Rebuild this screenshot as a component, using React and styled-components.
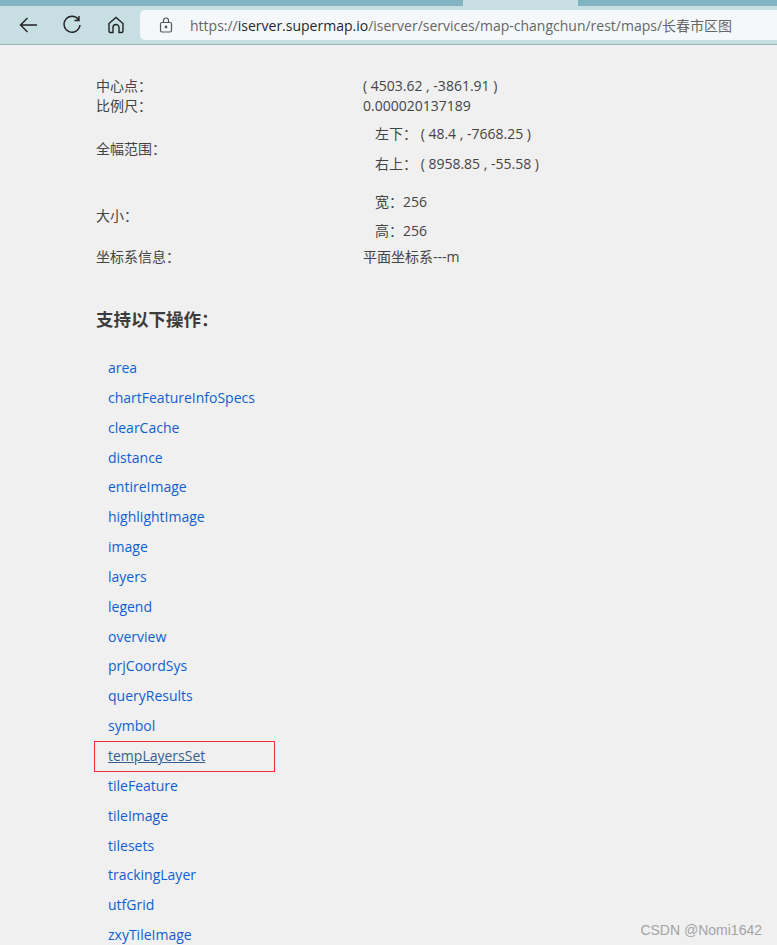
import styled, { createGlobalStyle } from 'styled-components';

const GlobalStyle = createGlobalStyle`
  html, body {
    margin: 0;
    padding: 0;
    height: 945px;
    overflow: hidden;
    background: #f0f0f0;
    font-family: "Open Sans", "Noto Sans CJK SC", sans-serif;
  }
`

const TabStrip = styled.div`
  height: 6px;
  background: #7fb4c0;
  display: flex;
  justify-content: flex-end;
  padding-right: 199px;
`
const ActiveTab = styled.div`
  width: 115px;
  height: 10px;
  background: #c7dfe3;
`
const Toolbar = styled.div`
  height: 38px;
  background: #c7dfe3;
  border-bottom: 1px solid #9fb5b9;
  display: flex;
  align-items: flex-start;
  padding-left: 17px;
`
const NavIcon = styled.svg`
  width: 22px;
  height: 22px;
  margin: 8px ${p => p.$gap}px 0 0;
  fill: none;
  stroke: #222;
  stroke-width: 1.4;
  flex-shrink: 0;
`
const AddressBar = styled.div`
  flex: 1;
  height: 30px;
  margin-top: 4px;
  background: #f4f8fa;
  border-radius: 5px 0 0 5px;
  display: flex;
  align-items: center;
  padding-left: 19px;
  font-size: 14px;
  color: #666;
`
const Host = styled.span`
  color: #1c2a33;
`
const Lock = styled.svg`
  width: 14px;
  height: 16px;
  margin-right: 17px;
  fill: none;
  stroke: #555;
  stroke-width: 1.2;
`
const Content = styled.div`
  padding: 30px 0 0 96px;
  color: #444;
  font-size: 14px;
`
const InfoRow = styled.div`
  display: grid;
  grid-template-columns: 267px 1fr;
  align-items: center;
  height: ${p => p.$h}px;
  margin-bottom: ${p => p.$mb || 0}px;
`
const SubList = styled.div`
  display: flex;
  flex-direction: column;
  gap: ${p => p.$gap}px;
  padding-left: 12px;
`
const Heading = styled.h2`
  margin: 40px 0 0;
  font-size: 17.5px;
  line-height: 26px;
  font-weight: 700;
  color: #3c3c3c;
`
const Ops = styled.ul`
  list-style: none;
  margin: 21px 0 0;
  padding: 0 0 0 12px;
`
const Op = styled.li`
  position: relative;
  height: 29.85px;
  line-height: 29.85px;
  color: #0f5fd0;
`
const OpLink = styled.span`
  color: ${p => (p.$active ? '#33608f' : '#0f5fd0')};
  text-decoration: ${p => (p.$active ? 'underline' : 'none')};
`
const Highlight = styled.div`
  position: absolute;
  left: -14px;
  top: 0;
  width: 181px;
  height: 31px;
  border: 1px solid #f03030;
  box-sizing: border-box;
`
const Watermark = styled.div`
  position: absolute;
  right: 15px;
  top: 921px;
  font-family: "Liberation Sans", sans-serif;
  font-size: 14px;
  line-height: 18px;
  color: #a4a4a4;
`

const ops = ['area', 'chartFeatureInfoSpecs', 'clearCache', 'distance', 'entireImage', 'highlightImage', 'image', 'layers', 'legend', 'overview', 'prjCoordSys', 'queryResults', 'symbol', 'tempLayersSet', 'tileFeature', 'tileImage', 'tilesets', 'trackingLayer', 'utfGrid', 'zxyTileImage']

export default function App() {
  return (
    <>
      <GlobalStyle />
      <TabStrip><ActiveTab /></TabStrip>
      <Toolbar>
        <NavIcon $gap={22} viewBox="0 0 22 22">
          <path d="M20 11H3.5M10.5 4 3.5 11l7 7" />
        </NavIcon>
        <NavIcon $gap={22} viewBox="0 0 22 22">
          <path d="M17.5 5.5A8 8 0 1 0 19 11M18 2v4.5h-4.5" />
        </NavIcon>
        <NavIcon $gap={13} viewBox="0 0 22 22">
          <path d="M4 9.5 11 3.5l7 6V17a1.5 1.5 0 0 1-1.5 1.5H14V13.5a3 3 0 0 0-6 0v5H5.500A1.500 1.500 0 0 1 4 17z" />
        </NavIcon>
        <AddressBar>
          <Lock viewBox="0 0 14 16">
            <rect x="1.5" y="5.500" width="11" height="9.500" rx="1.500" />
            <path d="M4.500 5.500V3.500a2.500 2.500 0 0 1 5 0v2" />
            <circle cx="7" cy="10" r=".8" fill="#555" />
          </Lock>
          <span>https://<Host>iserver.supermap.io</Host>/iserver/services/map-changchun/rest/maps/长春市区图</span>
        </AddressBar>
      </Toolbar>
      <Content>
        <InfoRow $h={20}><span>中心点：</span><span>( 4503.62 , -3861.91 )</span></InfoRow>
        <InfoRow $h={20} $mb={2}><span>比例尺：</span><span>0.000020137189</span></InfoRow>
        <InfoRow $h={62} $mb={6}>
          <span>全幅范围：</span>
          <SubList $gap={10}>
            <span>左下： ( 48.4 , -7668.25 )</span>
            <span>右上： ( 8958.85 , -55.58 )</span>
          </SubList>
        </InfoRow>
        <InfoRow $h={60} $mb={1}>
          <span>大小：</span>
          <SubList $gap={9}>
            <span>宽：256</span>
            <span>高：256</span>
          </SubList>
        </InfoRow>
        <InfoRow $h={20}><span>坐标系信息：</span><span>平面坐标系---m</span></InfoRow>
        <Heading>支持以下操作：</Heading>
        <Ops>
          {ops.map(name => (
            <Op key={name}>
              <OpLink $active={name === 'tempLayersSet'}>{name}</OpLink>
              {name === 'tempLayersSet' && <Highlight />}
            </Op>
          ))}
        </Ops>
      </Content>
      <Watermark>CSDN @Nomi1642</Watermark>
    </>
  );
}
